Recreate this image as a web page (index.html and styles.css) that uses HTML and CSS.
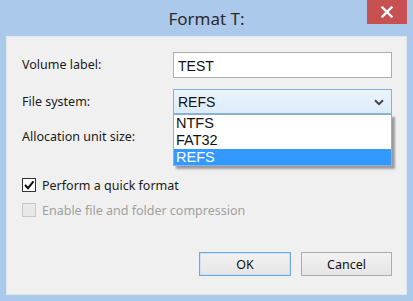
FILE: index.html
```html
<!DOCTYPE html>
<html>
<head>
<meta charset="utf-8">
<link rel="stylesheet" href="styles.css">
</head>
<body>
<div class="window">
  <div class="titlebar">
    <div class="title">Format T:</div>
    <div class="close">
      <svg width="12" height="12" viewBox="0 0 12 12"><path d="M1.5 1.5 L10.5 10.5 M10.5 1.5 L1.5 10.5" stroke="#fff" stroke-width="2.4" stroke-linecap="square"/></svg>
    </div>
  </div>
  <div class="panel">
    <div class="form">
      <div class="label">Volume label:</div>
      <div class="input">TEST</div>
      <div class="label">File system:</div>
      <div class="combo-wrap">
        <div class="combo open">
          <span>REFS</span>
          <svg class="chev" width="10" height="7" viewBox="0 0 10 7"><path d="M1 1.2 L5 5.2 L9 1.2" fill="none" stroke="#444" stroke-width="2"/></svg>
        </div>
        <div class="list">
          <div class="item">NTFS</div>
          <div class="item">FAT32</div>
          <div class="item sel">REFS</div>
        </div>
      </div>
      <div class="label">Allocation unit size:</div>
      <div class="combo hidden"></div>
    </div>
    <div class="checks">
      <div class="check">
        <span class="box"><svg width="12" height="12" viewBox="0 0 12 12"><path d="M2 6 L5 9.2 L10.5 2.3" fill="none" stroke="#111" stroke-width="2"/></svg></span>
        <span>Perform a quick format</span>
      </div>
      <div class="check disabled">
        <span class="box"></span>
        <span>Enable file and folder compression</span>
      </div>
    </div>
    <div class="buttons">
      <div class="btn default">OK</div>
      <div class="btn">Cancel</div>
    </div>
  </div>
</div>
</body>
</html>
```
FILE: styles.css
```css
html, body {
  margin: 0;
  padding: 0;
}
body {
  width: 413px;
  height: 301px;
  background: #abc9ea;
  font-family: "Noto Sans", "Open Sans", sans-serif;
  color: #1a1a1a;
  overflow: hidden;
}
.window {
  height: 301px;
  display: flex;
  flex-direction: column;
}
.titlebar {
  height: 37px;
  position: relative;
  display: flex;
  justify-content: center;
}
.title {
  padding-top: 8px;
  font-size: 17px;
  color: #2b2b2b;
  line-height: 22px;
}
.close {
  position: absolute;
  right: 6px;
  top: 0;
  width: 40px;
  height: 24px;
  background: #c75050;
  display: flex;
  align-items: center;
  justify-content: center;
}
.panel {
  margin: 0 7px;
  height: 257px;
  background: #f0f0f0;
  box-shadow: 0 0 0 1px #dfe6ee;
  box-sizing: border-box;
  padding: 15px 14px 0 15px;
  display: flex;
  flex-direction: column;
}
.form {
  display: grid;
  grid-template-columns: 151px 219px;
  grid-template-rows: 26px 25px 25px;
  row-gap: 11px;
  align-items: center;
}
.form > :nth-child(5), .form > :nth-child(6) {
  margin-top: -1px;
}
.label {
  font-size: 12.5px;
  line-height: 18px;
}
.input {
  height: 26px;
  box-sizing: border-box;
  border: 1px solid #abadb3;
  background: #fff;
  font-family: "Liberation Sans", Arial, sans-serif;
  font-size: 14px;
  padding: 5px 0 0 4px;
  color: #111;
}
.combo-wrap {
  position: relative;
  height: 25px;
}
.combo {
  height: 25px;
  box-sizing: border-box;
  border: 1px solid #acacac;
  background: linear-gradient(#f2f2f2, #e5e5e5);
  display: flex;
  align-items: center;
  justify-content: space-between;
  padding: 0 7px 0 4px;
  font-family: "Liberation Sans", Arial, sans-serif;
  font-size: 14px;
  color: #111;
}
.combo.open {
  border-color: #7eb4ea;
  background: linear-gradient(#ecf4fc, #dcecfc);
}
.chev {
  margin-top: 1px;
}
.list {
  position: absolute;
  left: 0;
  top: 25px;
  width: 219px;
  box-sizing: border-box;
  border: 1px solid #7eb4ea;
  border-top: 1px solid #9ab;
  background: #fff;
  box-shadow: 3px 3px 2px rgba(0, 0, 0, 0.35);
  font-family: "Liberation Sans", Arial, sans-serif;
  font-size: 14.5px;
  color: #111;
  z-index: 2;
}
.item {
  height: 17px;
  line-height: 17px;
  padding-left: 2px;
}
.item.sel {
  background: #3399ff;
  color: #fff;
  height: 16px;
}
.checks {
  margin-top: 28px;
  display: flex;
  flex-direction: column;
  gap: 11px;
}
.check {
  display: flex;
  align-items: center;
  gap: 6px;
  font-size: 12.5px;
  height: 14px;
}
.box {
  width: 14px;
  height: 14px;
  box-sizing: border-box;
  border: 1px solid #333;
  background: #fff;
  display: flex;
  align-items: center;
  justify-content: center;
}
.check.disabled {
  color: #a0a0a0;
}
.check.disabled .box {
  border-color: #c8c8c8;
  background: #e8e8e8;
}
.buttons {
  margin-top: 35px;
  display: flex;
  justify-content: flex-end;
  gap: 10px;
}
.btn {
  width: 91px;
  height: 24px;
  box-sizing: border-box;
  border: 1px solid #acacac;
  background: linear-gradient(#f2f2f2, #e5e5e5);
  display: flex;
  align-items: center;
  justify-content: center;
  font-size: 12.5px;
  color: #111;
}
.btn.default {
  width: 92px;
  border-color: #6fa8dc;
  box-shadow: inset 0 0 0 1px #cfe3f6;
}
```
